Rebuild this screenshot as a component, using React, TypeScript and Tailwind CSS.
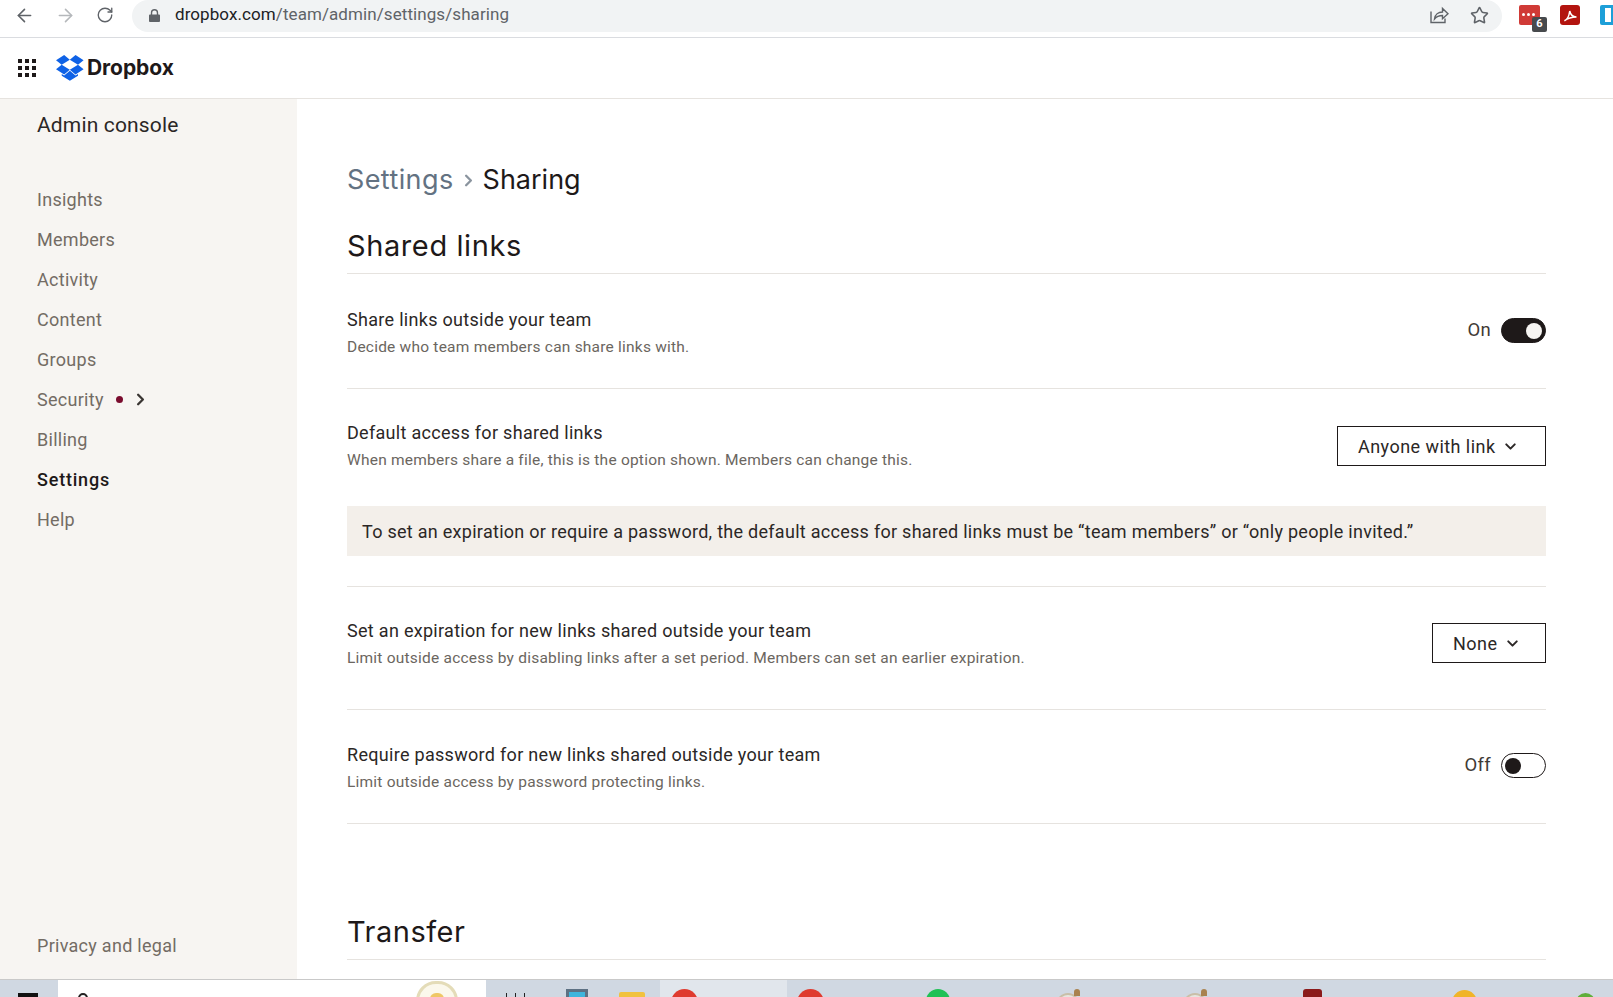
import React from 'react';
import { ArrowLeft, ArrowRight, ChevronDown, ChevronRight, RotateCw, Star } from 'lucide-react';

const navItems = ['Insights', 'Members', 'Activity', 'Content', 'Groups', 'Security', 'Billing', 'Settings', 'Help'];

const DropboxMark = () => (
  <svg viewBox="0 0 43 40" className="h-[26px] w-[28px]" fill="#0f62e6">
    <path d="M12.5 0L0 8.1l8.7 7 12.5-7.8-8.7-7.3zM0 21.9l12.5 8.2 8.7-7.3-12.5-7.7-8.7 6.8zm21.2.9l8.8 7.3 12.4-8.1-8.6-6.9-12.6 7.7zm21.2-14.7L30 0l-8.8 7.3 12.6 7.8 8.6-7zM21.3 24.4l-8.8 7.3-3.7-2.5V32l12.5 7.5L33.8 32v-2.8l-3.8 2.5-8.7-7.3z" />
  </svg>
);

const BrowserBar = () => (
  <div className="flex h-[38px] shrink-0 border-b border-[#dadce0] bg-white pb-[5px] font-['Roboto',sans-serif]">
    <div className="flex w-[132px] items-center pb-[2px] text-[#5f6368]">
      <ArrowLeft className="ml-[14px] h-[21px] w-[21px]" strokeWidth={1.8} />
      <ArrowRight className="ml-[20px] h-[21px] w-[21px] text-[#b5b8bb]" strokeWidth={1.8} />
      <RotateCw className="ml-[20px] h-[18px] w-[18px]" strokeWidth={1.8} />
    </div>
    <div className="flex w-[1370px] items-center rounded-l-[16px] rounded-r-[16px] bg-[#f1f3f4] pb-[2px] pl-[17px] pr-[13px]">
      <svg viewBox="0 0 12 14" className="h-[13px] w-[11px]" fill="#5f6368">
        <path d="M2 6V4a4 4 0 0 1 8 0v2h1a1 1 0 0 1 1 1v6a1 1 0 0 1-1 1H1a1 1 0 0 1-1-1V7a1 1 0 0 1 1-1zm1.5 0h5V4a2.5 2.5 0 0 0-5 0z" />
      </svg>
      <span className="ml-[15px] text-[17px] tracking-[0.08px] text-[#5f6368]">
        <span className="text-[#202124]">dropbox.com</span>/team/admin/settings/sharing
      </span>
      <div className="ml-auto flex items-center gap-[21px] text-[#5f6368]">
        <svg viewBox="0 0 20 20" className="h-[20px] w-[20px]" fill="none" stroke="currentColor" strokeWidth="1.4">
          <path d="M2 6.5v11h14v-4" />
          <path d="M5.5 14c.5-4.5 4-7 8-7V3.5L19 8.700l-5.5 5V10.500c-3.500 0-6 1-8 3.500z" />
        </svg>
        <Star className="h-[19px] w-[19px]" strokeWidth={2} />
      </div>
    </div>
    <div className="relative ml-[17px] mt-[5px] h-[20px] w-[21px] rounded-[2px] bg-[#d03a36]">
      <div className="ml-[3px] mt-[8px] flex gap-[2px]">
        <div className="h-[3px] w-[3px] rounded-full bg-white" />
        <div className="h-[3px] w-[3px] rounded-full bg-white" />
        <div className="h-[3px] w-[3px] rounded-full bg-white" />
      </div>
      <div className="absolute left-[13px] top-[12px] flex h-[15px] w-[15px] items-center justify-center rounded-[2px] bg-[#474a4d] text-[11px] font-bold text-white">
        6
      </div>
    </div>
    <div className="ml-[20px] mt-[5px] flex h-[20px] w-[20px] items-center justify-center rounded-[3px] bg-[#b3140f]">
      <svg viewBox="0 0 20 20" className="h-[15px] w-[15px]" fill="none" stroke="white" strokeWidth="2">
        <path d="M2 17c3-1 6-6 7-13 1 5 4 8 9 8-5 0-11 1-16 5z" />
      </svg>
    </div>
    <div className="ml-[20px] mt-[5px] flex h-[20px] w-[13px] items-start rounded-l-[2px] bg-[#1d9fd8] pl-[5px] pt-[3px]">
      <div className="h-[14px] w-[6px] bg-white" />
    </div>
  </div>
);

const Sidebar = () => (
  <aside className="flex w-[297px] shrink-0 flex-col bg-[#f7f5f2] pl-[37px]">
    <div className="mt-[11px] text-[21px] leading-[30px] tracking-[0.15px] text-[#2b2726]">Admin console</div>
    <nav className="mt-[39px]">
      {navItems.map((item) => (
        <div
          key={item}
          className={`flex h-[40px] items-center text-[18px] ${
            item === 'Settings' ? 'font-medium tracking-[0.8px] text-[#1e1919]' : 'tracking-[0.28px] text-[#736c64]'
          }`}
        >
          {item}
          {item === 'Security' && (
            <>
              <span className="ml-[12px] h-[7px] w-[7px] rounded-full bg-[#7a0c2e]" />
              <ChevronRight className="ml-[8px] h-[19px] w-[19px] text-[#3a3633]" strokeWidth={3} />
            </>
          )}
        </div>
      ))}
    </nav>
    <div className="mb-[21px] mt-auto text-[18px] leading-[24px] tracking-[0.28px] text-[#736c64]">Privacy and legal</div>
  </aside>
);

const Row = ({ title, desc, height, pt, control }: { title: string; desc: string; height: string; pt: string; control: React.ReactNode }) => (
  <div className={`flex items-start justify-between ${height} ${pt}`}>
    <div>
      <div className="text-[18px] leading-[26px] tracking-[0.3px] text-[#2b2726]">{title}</div>
      <div className="mt-[2px] text-[15.5px] leading-[25px] tracking-[0.22px] text-[#6b6660]">{desc}</div>
    </div>
    {control}
  </div>
);

const Toggle = ({ on }: { on: boolean }) => (
  <div className="flex items-center">
    <span className="mr-[10px] text-[18.5px] tracking-[0.3px] text-[#3f3a36]">{on ? 'On' : 'Off'}</span>
    <div
      className={`flex h-[25px] w-[45px] items-center rounded-full border border-[#1e1919] ${
        on ? 'justify-end bg-[#1e1919] pr-[3px]' : 'justify-start bg-white pl-[3px]'
      }`}
    >
      <div className={`h-[16px] w-[16px] rounded-full ${on ? 'bg-[#f7f5f2]' : 'bg-[#1e1919]'}`} />
    </div>
  </div>
);

const Select = ({ label, className }: { label: string; className: string }) => (
  <div className={`flex h-[40px] items-center border border-[#1e1919] pl-[20px] text-[18px] tracking-[0.45px] text-[#2b2726] ${className}`}>
    {label}
    <ChevronDown className="ml-[7px] h-[17px] w-[17px]" strokeWidth={2.8} />
  </div>
);

const Content = () => (
  <main className="min-w-0 flex-1 pl-[50px] pr-[67px]">
    <div className="mt-[63px] flex items-center font-['Inter',sans-serif] text-[27px] leading-[36px] text-[#1e1919]">
      <span className="tracking-[0.4px] text-[#637282]">Settings</span>
      <ChevronRight className="mx-[5px] h-[19px] w-[19px] text-[#8a949e]" strokeWidth={3} />
      <span>Sharing</span>
    </div>
    <h2 className="mt-[28px] border-b border-[#e6e3df] pb-[8px] font-['Inter',sans-serif] text-[29px] leading-[39px] tracking-[0.6px] text-[#1e1919]">
      Shared links
    </h2>
    <div className="border-b border-[#e6e3df]">
      <Row
        title="Share links outside your team"
        desc="Decide who team members can share links with."
        height="h-[114px]"
        pt="pt-[33px]"
        control={
          <div className="mt-[10px]">
            <Toggle on />
          </div>
        }
      />
    </div>
    <div className="border-b border-[#e6e3df] pb-[30px]">
      <Row
        title="Default access for shared links"
        desc="When members share a file, this is the option shown. Members can change this."
        height="h-[117px]"
        pt="pt-[31px]"
        control={<Select label="Anyone with link" className="mt-[6px] w-[209px]" />}
      />
      <div className="flex h-[50px] items-center bg-[#f3efea] pl-[15px] text-[18px] tracking-[0.28px] text-[#2b2726]">
        To set an expiration or require a password, the default access for shared links must be “team members” or “only people invited.”
      </div>
    </div>
    <div className="border-b border-[#e6e3df]">
      <Row
        title="Set an expiration for new links shared outside your team"
        desc="Limit outside access by disabling links after a set period. Members can set an earlier expiration."
        height="h-[122px]"
        pt="pt-[31px]"
        control={<Select label="None" className="mt-[5px] w-[114px]" />}
      />
    </div>
    <div className="border-b border-[#e6e3df]">
      <Row
        title="Require password for new links shared outside your team"
        desc="Limit outside access by password protecting links."
        height="h-[113px]"
        pt="pt-[32px]"
        control={
          <div className="mt-[10px]">
            <Toggle on={false} />
          </div>
        }
      />
    </div>
    <h2 className="mt-[88px] border-b border-[#e6e3df] pb-[8px] font-['Inter',sans-serif] text-[29px] leading-[39px] tracking-[0.5px] text-[#1e1919]">
      Transfer
    </h2>
  </main>
);

const TrayBird = ({ className }: { className: string }) => (
  <div className={`relative h-[20px] w-[24px] ${className}`}>
    <div className="absolute bottom-[-8px] left-0 h-[24px] w-[24px] rounded-full border-2 border-[#c9bfa8] bg-[#e6e6e0]" />
    <div className="absolute right-0 top-0 h-[7px] w-[6px] rounded-t-full bg-[#a9824f]" />
  </div>
);

const Taskbar = () => (
  <div className="flex h-[18px] shrink-0 overflow-hidden border-t border-[#c9c9c9] bg-[#d0d8e2]">
    <div className="ml-[18px] mt-[13px] h-[8px] w-[20px] bg-[#111111]" />
    <div className="ml-[20px] flex w-[428px] bg-white">
      <div className="ml-[20px] mt-[13px] h-[10px] w-[10px] rounded-full border-2 border-[#222222]" />
      <div className="ml-[328px] mt-[1px] flex h-[40px] w-[42px] justify-center rounded-full border-[3px] border-[#e4dcb8] bg-[#fbf8ec] pt-[9px]">
        <div className="h-[12px] w-[14px] rounded-full bg-[#efc766]" />
      </div>
    </div>
    <div className="ml-[20px] mt-[13px] flex gap-[8px]">
      <div className="h-[8px] w-px bg-[#222222]" />
      <div className="h-[8px] w-px bg-[#222222]" />
      <div className="h-[8px] w-px bg-[#222222]" />
    </div>
    <div className="ml-[41px] mt-[9px] h-[14px] w-[22px] border-[3px] border-[#5d7183] bg-[#3fb5dc]" />
    <div className="ml-[31px] mt-[12px] h-[10px] w-[26px] rounded-t-[2px] bg-[#f1c23f]" />
    <div className="ml-[15px] flex w-[127px] bg-[#e1e6ec] pl-[11px]">
      <div className="mt-[9px] h-[28px] w-[27px] rounded-full bg-[#df3b2f]" />
    </div>
    <div className="ml-[10px] mt-[9px] h-[28px] w-[27px] rounded-full bg-[#df3b2f]" />
    <div className="ml-[102px] mt-[9px] h-[28px] w-[24px] rounded-full bg-[#20c155]" />
    <TrayBird className="ml-[106px] mt-[9px]" />
    <TrayBird className="ml-[103px] mt-[9px]" />
    <div className="ml-[96px] mt-[9px] h-[12px] w-[19px] rounded-t-[3px] bg-[#8b1a1a]" />
    <div className="ml-[130px] mt-[10px] h-[28px] w-[25px] rounded-full bg-[#f0b429]" />
    <div className="ml-[99px] mt-[13px] h-[20px] w-[19px] rounded-full bg-[#5fae3a]" />
  </div>
);

export default function App() {
  return (
    <div className="flex h-screen flex-col overflow-hidden bg-white font-['Roboto',sans-serif]">
      <BrowserBar />
      <header className="flex h-[61px] shrink-0 items-center border-b border-[#e6e3df] pl-[18px]">
        <div className="grid grid-cols-3 gap-[3px]">
          {Array.from({ length: 9 }).map((_, i) => (
            <div key={i} className="h-[4px] w-[4px] bg-[#1e1919]" />
          ))}
        </div>
        <div className="ml-[20px]">
          <DropboxMark />
        </div>
        <span className="ml-[3px] font-['Inter',sans-serif] text-[21px] font-bold tracking-[-0.05px] text-[#1e1919]">Dropbox</span>
      </header>
      <div className="flex min-h-0 flex-1">
        <Sidebar />
        <Content />
      </div>
      <Taskbar />
    </div>
  );
}
